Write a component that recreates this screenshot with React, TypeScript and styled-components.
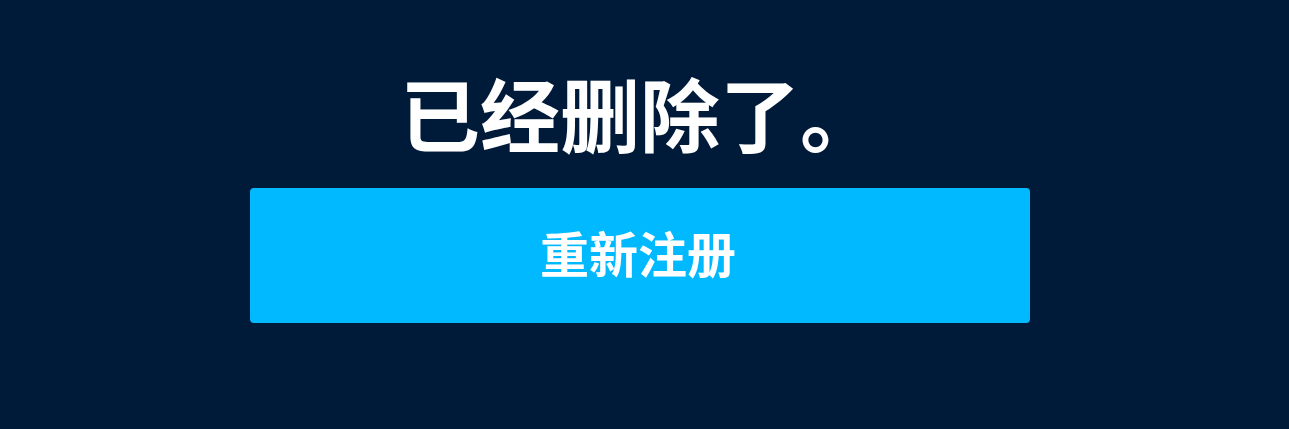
import React from 'react';
import styled, { createGlobalStyle } from 'styled-components';

const GlobalStyle = createGlobalStyle`
  html, body {
    margin: 0;
    padding: 0;
    background: #001a39;
  }
  body {
    font-family: "Noto Sans CJK SC", "Noto Sans", sans-serif;
  }
`;

const Page = styled.div`
  min-height: 429px;
  background: #001a39;
  padding: 61px 0 0 250px;
  box-sizing: border-box;
`;

const Panel = styled.div`
  width: 780px;
  display: flex;
  flex-direction: column;
  align-items: center;
`;

const Title = styled.h1`
  margin: 0 0 27px;
  font-size: 80px;
  line-height: 100px;
  font-weight: 700;
  color: #ffffff;
`;

const Button = styled.button`
  width: 100%;
  height: 135px;
  padding: 0 4px 8px 0;
  border: none;
  border-radius: 4px;
  background: #00b9ff;
  color: #ffffff;
  font-family: inherit;
  font-size: 49px;
  font-weight: 700;
  cursor: pointer;
`;

function App() {
  return (
    <>
      <GlobalStyle />
      <Page>
        <Panel>
          <Title>已经删除了。</Title>
          <Button>重新注册</Button>
        </Panel>
      </Page>
    </>
  );
}

export default App;
